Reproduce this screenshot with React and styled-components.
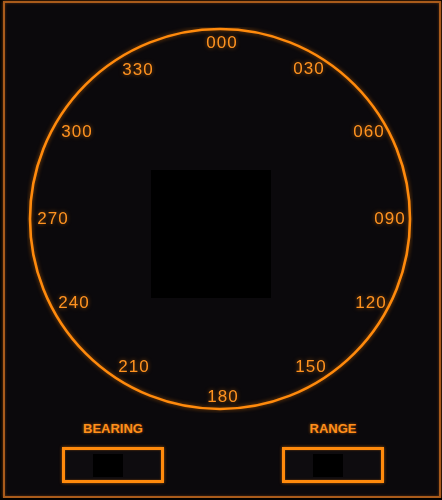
import React from 'react';
import styled, { createGlobalStyle } from 'styled-components';

const GlobalStyle = createGlobalStyle`
html, body {
  margin: 0;
  padding: 0;
  background: #000;
}
`;

const Frame = styled.div`
box-sizing: border-box;
width: 438px;
height: 497px;
margin: 1px 0 0 3px;
border: 2px solid #a95b1b;
box-shadow: 0 0 3px rgba(230, 120, 30, 0.5), inset 0 0 3px rgba(230, 120, 30, 0.35);
background: #0b090c;
display: flex;
flex-direction: column;
font-family: "Liberation Sans", Arial, sans-serif;
`;

const Dial = styled.svg`
display: block;
width: 386px;
height: 386px;
margin: 24px 0 0 22px;
`;

const Glow = styled.g`
filter: drop-shadow(0 0 2px rgba(255, 130, 0, 0.55));
`;

const Readouts = styled.div`
display: grid;
grid-template-columns: 102px 102px;
column-gap: 118px;
padding-left: 57px;
margin-top: 8px;
`;

const Readout = styled.div`
display: flex;
flex-direction: column;
align-items: center;
`;

const Caption = styled.div`
color: #ff8f1c;
font-size: 13px;
font-weight: bold;
line-height: 16px;
text-shadow: 0 0 3px rgba(255, 130, 0, 0.6);
margin-bottom: 10px;
`;

const Box = styled.div`
box-sizing: border-box;
width: 102px;
height: 36px;
border: 3px solid #ff8a0c;
box-shadow: 0 0 3px rgba(255, 130, 0, 0.6), inset 0 0 2px rgba(255, 130, 0, 0.5);
background: #0e0c0f;
display: flex;
align-items: center;
padding-left: 28px;
align-self: stretch;
`;

const Value = styled.div`
width: 30px;
height: 23px;
background: #000;
`;

const ORANGE = '#ff8a0c';

// label centres, in dial coordinates
const bearings = [
    ['000', 195, 15],
    ['030', 282, 41],
    ['060', 342, 104],
    ['090', 363, 191],
    ['120', 344, 275],
    ['150', 284, 339],
    ['180', 196, 369],
    ['210', 107, 339],
    ['240', 47, 275],
    ['270', 26, 191],
    ['300', 50, 104],
    ['330', 111, 42],
];

function App() {
    return (
        <>
            <GlobalStyle />
            <Frame>
                <Dial viewBox="0 0 386 386">
                    <rect x="124" y="143" width="120" height="128" fill="#000" />
                    <Glow>
                        <circle cx="193" cy="192" r="190" fill="none" stroke={ORANGE} strokeWidth="2.6" />
                        {bearings.map(([label, x, y]) => (
                            <text
                                key={label}
                                x={x}
                                y={y}
                                textAnchor="middle"
                                dominantBaseline="central"
                                fill="#ff9320"
                                fontFamily='"Liberation Sans", Arial, sans-serif'
                                fontSize="17"
                                letterSpacing="1"
                            >
                                {label}
                            </text>
                        ))}
                    </Glow>
                </Dial>
                <Readouts>
                    <Readout>
                        <Caption>BEARING</Caption>
                        <Box><Value /></Box>
                    </Readout>
                    <Readout>
                        <Caption>RANGE</Caption>
                        <Box><Value /></Box>
                    </Readout>
                </Readouts>
            </Frame>
        </>
    );
}

export default App;
